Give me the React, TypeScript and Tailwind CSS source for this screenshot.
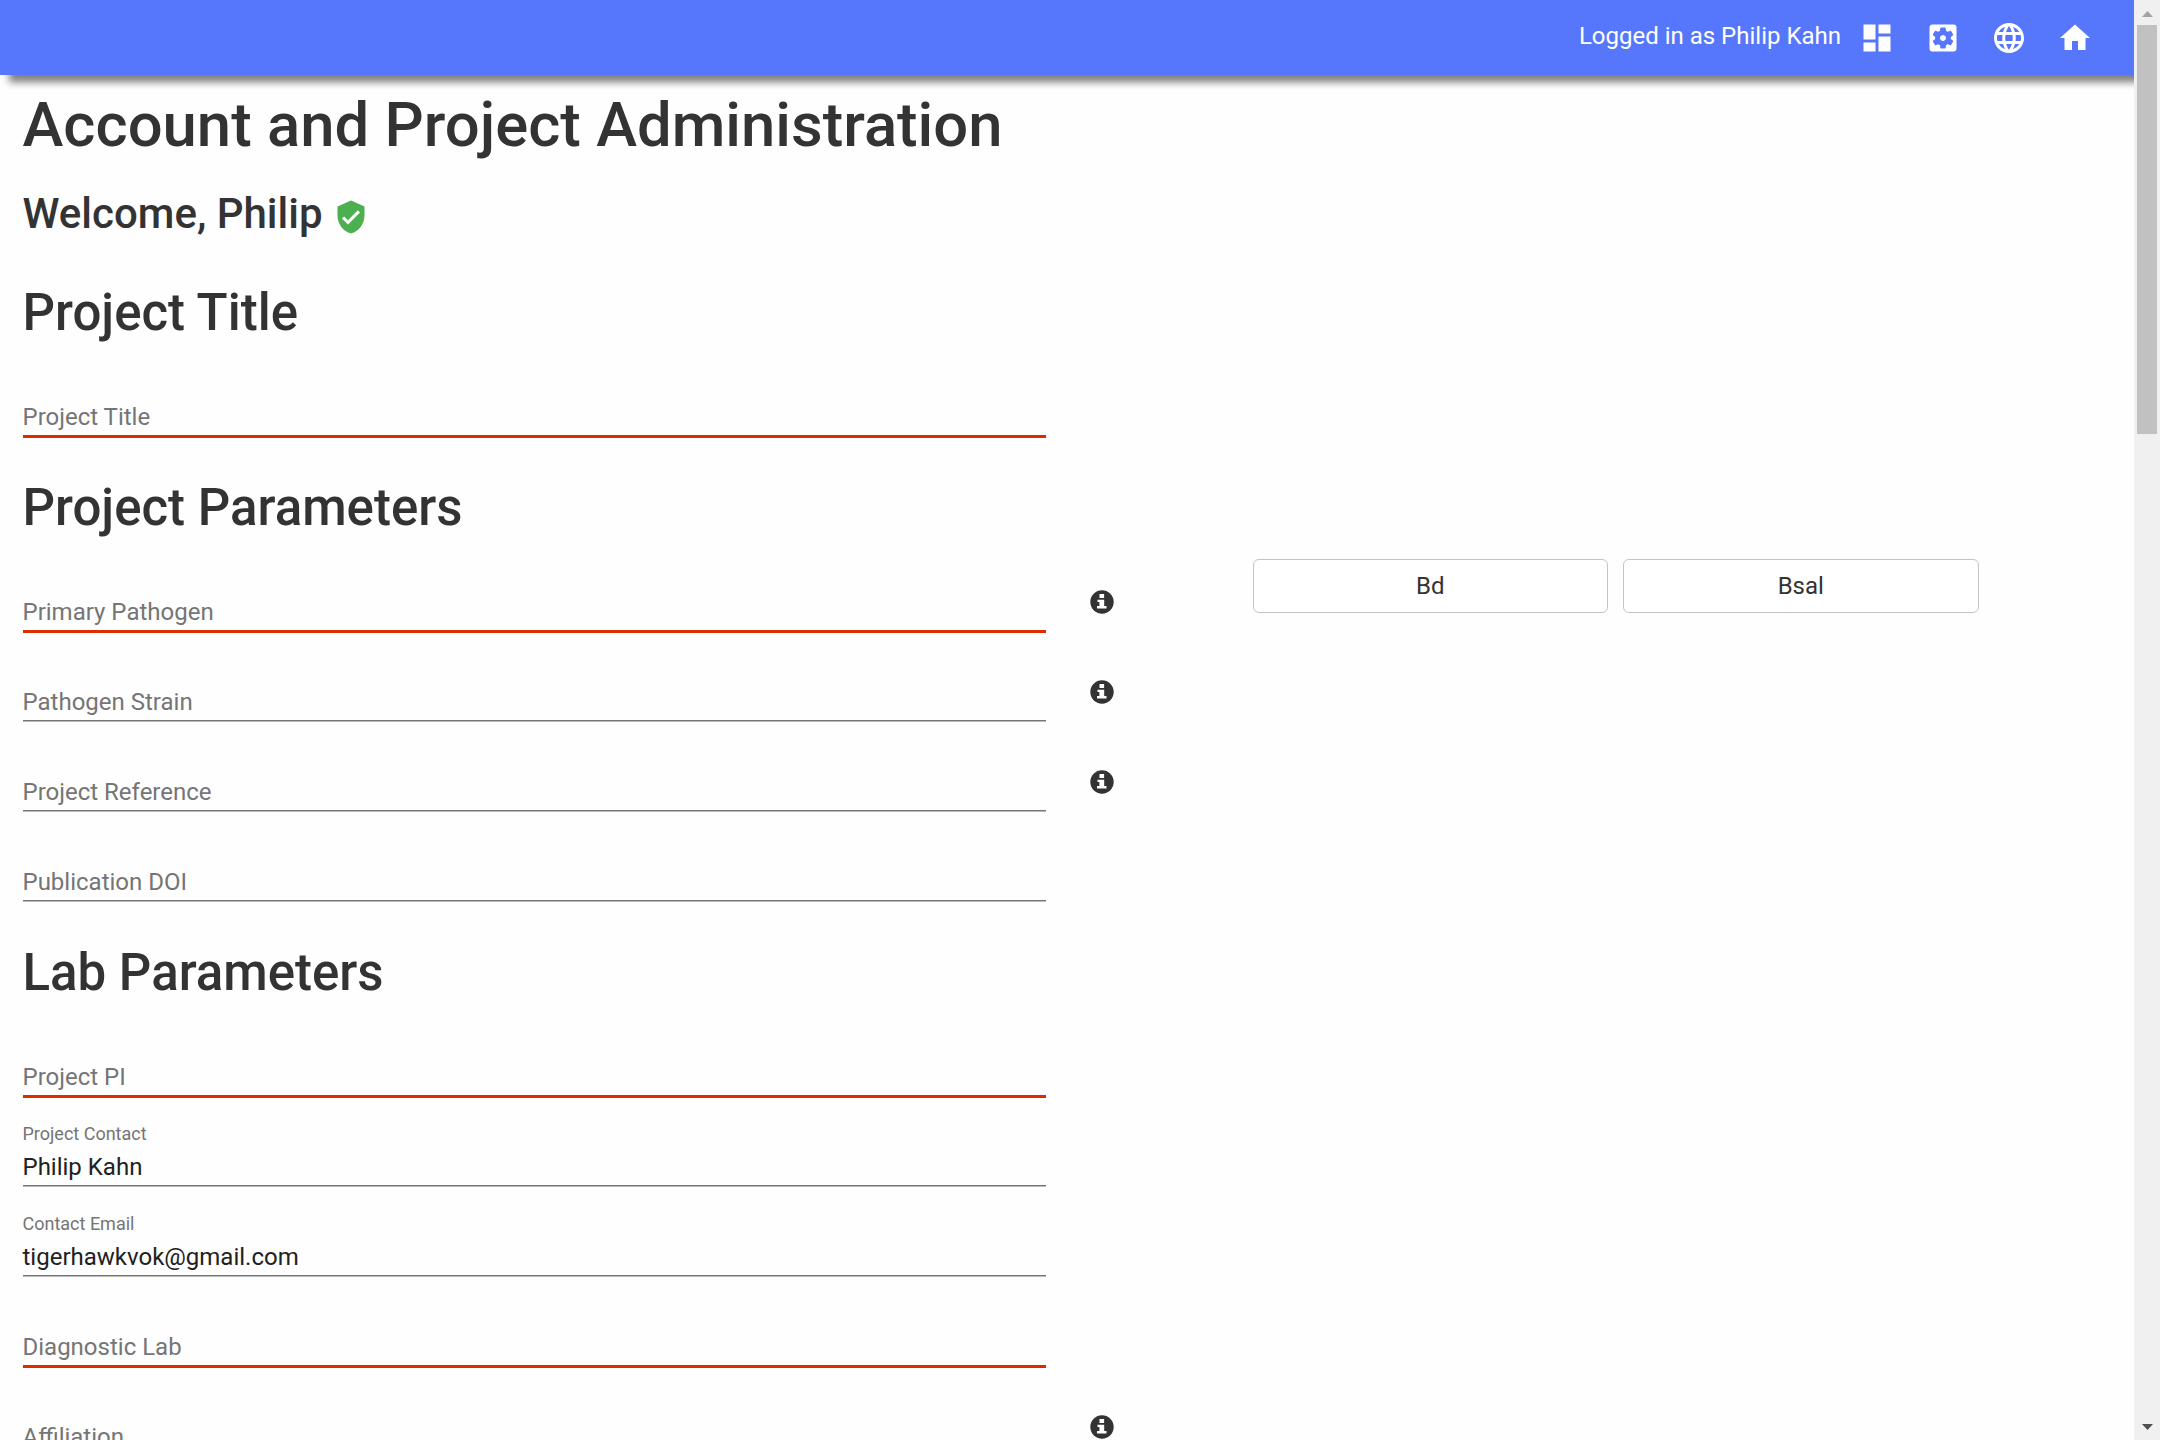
import React from "react";
import { MdDashboard, MdHome, MdLanguage, MdSettingsApplications, MdVerifiedUser } from "react-icons/md";

type FieldProps = {
  label: string;
  value?: string;
  required?: boolean;
  info?: boolean;
  children?: React.ReactNode;
};

function InfoIcon() {
  return (
    <svg viewBox="0 0 24 24" className="h-6 w-6 text-[#333]">
      <circle cx="12" cy="12" r="11.7" fill="currentColor" />
      <rect x="9.5" y="4" width="4.6" height="4" fill="#fff" />
      <path d="M7.5 9.7h6.7V16h2.3v2.5H7V16h2.4v-4.1H7.5z" fill="#fff" />
    </svg>
  );
}

function Field({ label, value, required, info, children }: FieldProps) {
  return (
    <div className="flex h-[90px] items-start">
      <div className="w-[1023px] shrink-0 pt-3">
        <div className="h-[30px] text-[18px] leading-[30px] text-[#757575]">{value ? label : ""}</div>
        {value ? (
          <div className="h-9 text-[24px] leading-9 text-[#212121]">{value}</div>
        ) : (
          <div className="h-9 text-[24px] leading-9 text-[#757575]">{label}</div>
        )}
        {required ? (
          <div className="h-[3px] bg-[#dd2c00]" />
        ) : (
          <div className="h-[2px] border-b border-[#b9b9b9] bg-[#757575]" />
        )}
      </div>
      {info && (
        <div className="ml-[44.5px] pt-[38px]">
          <InfoIcon />
        </div>
      )}
      {children}
    </div>
  );
}

function Choice({ children }: { children: React.ReactNode }) {
  return (
    <button className="h-[54px] w-[355.5px] rounded-[6px] border border-[#c4c4c4] bg-white text-[24px] leading-none text-[#333]">
      {children}
    </button>
  );
}

function Heading({ children }: { children: React.ReactNode }) {
  return <h2 className="pt-[33.5px] pb-[15.4px] text-[51px] leading-[56.1px] font-medium">{children}</h2>;
}

function NavIcon({ children }: { children: React.ReactNode }) {
  return <button className="flex h-[60px] w-[60px] items-center justify-center text-[36px]">{children}</button>;
}

export default function App() {
  return (
    <div className="flex h-[1440px] w-[2160px] overflow-hidden bg-[#fefefe] font-[Roboto,sans-serif] text-[#333]">
      <div className="h-full w-[2134px] overflow-hidden">
        <header className="flex h-[75px] items-center justify-end gap-1.5 bg-[#5677fc] pr-[29.5px] text-white shadow-[9px_7.5px_7.5px_rgba(0,0,0,0.5)]">
          <span className="-mr-[0.5px] pb-[4px] text-[24px] leading-9">Logged in as Philip Kahn</span>
          <NavIcon><MdDashboard /></NavIcon>
          <NavIcon><MdSettingsApplications /></NavIcon>
          <NavIcon><MdLanguage /></NavIcon>
          <NavIcon><MdHome /></NavIcon>
        </header>
        <main className="px-[22.5px]">
          <h1 className="pt-[17px] text-[61.6px] leading-[67.7px] font-medium">Account and Project Administration</h1>
          <h3 className="mt-[31.5px] mb-[14.2px] flex h-[46.2px] items-center gap-[10.4px] text-[42px] leading-[46.2px] font-medium">
            Welcome, Philip
            <MdVerifiedUser className="mt-1.5 h-9 w-9 text-[#4caf50]" />
          </h3>
          <Heading>Project Title</Heading>
          <Field label="Project Title" required />
          <Heading>Project Parameters</Heading>
          <Field label="Primary Pathogen" required info>
            <div className="ml-[138.5px] flex gap-[15px] pt-[7.5px]">
              <Choice>Bd</Choice>
              <Choice>Bsal</Choice>
            </div>
          </Field>
          <Field label="Pathogen Strain" info />
          <Field label="Project Reference" info />
          <Field label="Publication DOI" />
          <Heading>Lab Parameters</Heading>
          <Field label="Project PI" required />
          <Field label="Project Contact" value="Philip Kahn" />
          <Field label="Contact Email" value="tigerhawkvok@gmail.com" />
          <Field label="Diagnostic Lab" required />
          <Field label="Affiliation" required info />
        </main>
      </div>
      <div className="flex h-full w-[26px] flex-col items-center bg-[#f0f0f0]">
        <div className="flex h-[25px] items-end pb-2">
          <svg viewBox="0 0 11 6" className="h-[6px] w-[11px]"><path d="M5.5 0 11 6H0z" fill="#a3a3a3" /></svg>
        </div>
        <div className="h-[409px] w-5 bg-[#c1c1c1]" />
        <div className="mt-auto flex h-[25px] items-start pt-[8.5px]">
          <svg viewBox="0 0 11 6" className="h-[6px] w-[11px]"><path d="M0 0h11L5.5 6z" fill="#505050" /></svg>
        </div>
      </div>
    </div>
  );
}
